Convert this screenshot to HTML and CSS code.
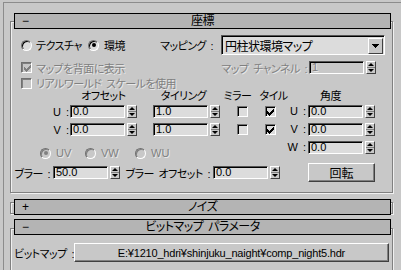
FILE: index.html
```html
<!DOCTYPE html>
<html lang="ja">
<head>
<meta charset="UTF-8">
<title>座標</title>
<link rel="stylesheet" href="styles.css">
</head>
<body>
<div class="panel">
    <div class="rollout rollout-coords">
        <div class="roll-head"><span class="sign">−</span><span class="roll-title">座標</span></div>

        <div class="row row-map">
            <label class="opt opt-tex"><span class="radio"></span>テクスチャ</label>
            <label class="opt opt-env"><span class="radio on"></span>環境</label>
            <span class="map-label">マッピング :</span>
            <div class="select">
                <span class="select-text">円柱状環境マップ</span>
                <span class="select-btn">
                    <svg width="7" height="4" viewBox="0 0 7 4"><path d="M0 0h7v1H0zM1 1h5v1H1zM2 2h3v1H2zM3 3h1v1H3z"/></svg>
                </span>
            </div>
        </div>

        <div class="row row-back">
            <label class="opt off">
                <span class="check">
                    <svg width="7" height="7" viewBox="0 0 7 7"><path d="M6 0h1v3H6zM5 1h1v3H5zM4 2h1v3H4zM3 3h1v3H3zM2 4h1v3H2zM1 3h1v3H1zM0 2h1v3H0z"/></svg>
                </span>マップを背面に表示
            </label>
            <span class="chan-label off">マップ チャンネル :</span>
            <span class="spinner"><span class="field off">1</span><span class="spin"></span></span>
        </div>

        <div class="row row-real">
            <label class="opt off"><span class="check"></span>リアルワールド スケールを使用</label>
        </div>

        <div class="row row-heads">
            <span class="h-off">オフセット</span>
            <span class="h-til">タイリング</span>
            <span class="h-mir">ミラー</span>
            <span class="h-tile">タイル</span>
            <span class="h-ang">角度</span>
        </div>

        <div class="uvw">
            <span class="axis">U :</span>
            <span class="spinner c-off"><span class="field">0.0</span><span class="spin"></span></span>
            <span class="spinner c-til"><span class="field">1.0</span><span class="spin"></span></span>
            <span class="check c-mir"></span>
            <span class="check c-tile">
                <svg width="7" height="7" viewBox="0 0 7 7"><path d="M6 0h1v3H6zM5 1h1v3H5zM4 2h1v3H4zM3 3h1v3H3zM2 4h1v3H2zM1 3h1v3H1zM0 2h1v3H0z"/></svg>
            </span>
            <span class="axis c-alab">U :</span>
            <span class="spinner c-ang"><span class="field">0.0</span><span class="spin"></span></span>

            <span class="axis">V :</span>
            <span class="spinner c-off"><span class="field">0.0</span><span class="spin"></span></span>
            <span class="spinner c-til"><span class="field">1.0</span><span class="spin"></span></span>
            <span class="check c-mir"></span>
            <span class="check c-tile">
                <svg width="7" height="7" viewBox="0 0 7 7"><path d="M6 0h1v3H6zM5 1h1v3H5zM4 2h1v3H4zM3 3h1v3H3zM2 4h1v3H2zM1 3h1v3H1zM0 2h1v3H0z"/></svg>
            </span>
            <span class="axis c-alab">V :</span>
            <span class="spinner c-ang"><span class="field">0.0</span><span class="spin"></span></span>

            <div class="uv-radios off">
                <label class="opt opt-uv"><span class="radio on"></span>UV</label>
                <label class="opt opt-vw"><span class="radio"></span>VW</label>
                <label class="opt"><span class="radio"></span>WU</label>
            </div>
            <span class="axis c-alab">W :</span>
            <span class="spinner c-ang"><span class="field">0.0</span><span class="spin"></span></span>
        </div>

        <div class="row row-blur">
            <span class="blur-label">ブラー :</span>
            <span class="spinner"><span class="field">50.0</span><span class="spin"></span></span>
            <span class="blur-off-label">ブラー オフセット :</span>
            <span class="spinner"><span class="field">0.0</span><span class="spin"></span></span>
            <button class="btn btn-rotate">回転</button>
        </div>
    </div>

    <div class="rollout rollout-noise">
        <div class="roll-head"><span class="sign">+</span><span class="roll-title">ノイズ</span></div>
    </div>

    <div class="rollout rollout-bitmap">
        <div class="roll-head"><span class="sign">−</span><span class="roll-title">ビットマップ パラメータ</span></div>
        <div class="row row-bitmap">
            <span class="bitmap-label">ビットマップ :</span>
            <button class="btn btn-path">E:¥1210_hdri¥shinjuku_naight¥comp_night5.hdr</button>
        </div>
    </div>
</div>
</body>
</html>
```

FILE: styles.css
```css
body {
    margin: 0;
    width: 401px;
    height: 270px;
    overflow: hidden;
    background: #c8c8c8;
    font-family: "Liberation Sans", "Noto Sans CJK JP", sans-serif;
    font-size: 11px;
    font-feature-settings: "palt" 1;
    letter-spacing: -0.5px;
    word-spacing: 2px;
    white-space: nowrap;
    color: #000;
}

.panel {
    box-sizing: border-box;
    height: 268px;
    margin: 2px 0 0 3px;
    padding-left: 6px;
    border-top: 1px solid #8c8c8c;
    border-left: 1px solid #8c8c8c;
}

/* rollouts */
.rollout {
    box-sizing: border-box;
    width: 383px;
    border: 1px solid #808080;
    box-shadow: 1px 1px 0 #f0f0f0, inset 1px 1px 0 #f0f0f0;
}

.rollout-coords {
    margin-top: 18px;
    padding-bottom: 10px;
}

.rollout-noise {
    margin-top: 9px;
}

.rollout-bitmap {
    margin-top: 14px;
    height: 42px;
    border-bottom: none;
}

.roll-head {
    box-sizing: border-box;
    height: 16px;
    margin: -9px 1px 0 3px;
    border: 1px solid #000;
    background: #b4b4b4;
    display: grid;
    grid-template-columns: 1fr auto 1fr;
    align-items: center;
    line-height: 14px;
    font-size: 12px;
}

.rollout-noise .roll-head {
    margin-top: -4px;
    margin-bottom: -2px;
}

.rollout-bitmap .roll-head {
    margin-top: -10px;
}

.sign {
    padding-left: 7px;
    letter-spacing: 0;
}

/* rows */
.row {
    display: flex;
    align-items: center;
}

.row-map {
    height: 20px;
    margin-top: 6px;
    padding-left: 10px;
}

.row-back {
    height: 13px;
    margin-top: 6px;
    padding: 0 16px 0 10px;
}

.row-real {
    height: 12px;
    margin-top: 3px;
    padding-left: 10px;
}

.row-heads {
    height: 12px;
}

.row-blur {
    height: 19px;
    margin-top: 4px;
}

.row-bitmap {
    height: 19px;
    margin-top: 8px;
    padding-right: 4px;
}

.opt {
    display: flex;
    align-items: center;
    gap: 4px;
}

.opt-tex { width: 67px; }
.opt-env { width: 72px; gap: 5px; }

.map-label { width: 61px; }

.off {
    color: #808080;
    text-shadow: 1px 1px 0 #e8e8e8;
}

/* right-aligned labels overflow to the left */
.chan-label,
.blur-label,
.blur-off-label,
.axis {
    box-sizing: border-box;
    display: flex;
    justify-content: flex-end;
}

/* radio / check */
.radio {
    box-sizing: border-box;
    flex: none;
    width: 11px;
    height: 11px;
    border-radius: 50%;
    border: 1px solid;
    border-color: #707070 #fff #fff #707070;
    background: #dcdcdc;
    box-shadow: inset 1px 1px 0 #000;
    display: flex;
    align-items: center;
    justify-content: center;
}

.radio.on::after {
    content: "";
    width: 4px;
    height: 4px;
    border-radius: 50%;
    background: #000;
}

.off .radio {
    background: #c8c8c8;
    box-shadow: inset 1px 1px 0 #808080;
}

.off .radio.on::after {
    background: #808080;
}

.check {
    box-sizing: border-box;
    flex: none;
    width: 11px;
    height: 11px;
    border: 1px solid;
    border-color: #707070 #fff #fff #707070;
    background: #dcdcdc;
    box-shadow: inset 1px 1px 0 #000;
    display: flex;
    align-items: center;
    justify-content: center;
    padding: 1px 0 0 1px;
}

.check svg {
    fill: #000;
}

.off .check {
    background: #c8c8c8;
    box-shadow: inset 1px 1px 0 #808080;
}

.off .check svg {
    fill: #808080;
}

/* fields and spinners */
.spinner {
    display: flex;
    align-items: center;
    gap: 2px;
    width: 67px;
    flex: none;
}

.field {
    box-sizing: border-box;
    width: 55px;
    height: 13px;
    border: 1px solid;
    border-color: #555 #fff #fff #555;
    box-shadow: inset 1px 1px 0 #000;
    background: #dcdcdc;
    padding-left: 2px;
    line-height: 11px;
    letter-spacing: 0;
}

.field.off {
    background: #c8c8c8;
}

.spin {
    box-sizing: border-box;
    width: 10px;
    height: 13px;
    border: 1px solid;
    border-color: #fff #404040 #404040 #fff;
    background: linear-gradient(#c8c8c8 5px, #808080 5px, #808080 6px, #c8c8c8 6px);
    display: flex;
    flex-direction: column;
    align-items: center;
}

.spin::before {
    content: "";
    margin-top: 1px;
    border-left: 3px solid transparent;
    border-right: 3px solid transparent;
    border-bottom: 3px solid #000;
}

.spin::after {
    content: "";
    margin-top: auto;
    margin-bottom: 1px;
    border-left: 3px solid transparent;
    border-right: 3px solid transparent;
    border-top: 3px solid #000;
}

.chan-label {
    flex: 1;
    padding-right: 2px;
}

/* dropdown */
.select {
    box-sizing: border-box;
    display: flex;
    align-items: center;
    width: 164px;
    height: 20px;
    border: 1px solid;
    border-color: #555 #fff #fff #555;
    box-shadow: inset 1px 1px 0 #000;
    background: #dcdcdc;
    padding: 1px 1px 0 3px;
}

.select-text {
    flex: 1;
    font-size: 12px;
}

.select-btn {
    box-sizing: border-box;
    width: 15px;
    height: 16px;
    border: 1px solid;
    border-color: #fff #404040 #404040 #fff;
    background: #c8c8c8;
    display: flex;
    align-items: center;
    justify-content: center;
}

/* offset / tiling / angle table */
.row-heads span {
    text-align: center;
}

.h-off { margin-left: 59px; width: 67px; }
.h-til { margin-left: 13px; width: 67px; }
.h-mir { margin-left: 6px; width: 29px; }
.h-tile { margin-left: 7px; width: 29px; }
.h-ang { margin-left: 20px; width: 45px; }

.uvw {
    display: grid;
    grid-template-columns: 59px 67px 16px 67px 8px 28px 28px 24px 67px;
    grid-template-rows: 13px 13px 18px;
    row-gap: 5px;
    margin-top: 4px;
    align-items: center;
}

.axis {
    grid-column: 1;
    padding-right: 1px;
    letter-spacing: 0;
}

.c-off { grid-column: 2; }
.c-til { grid-column: 4; }
.c-mir { grid-column: 6; justify-self: center; }
.c-tile { grid-column: 7; justify-self: center; }
.c-alab { grid-column: 8; padding-right: 2px; }
.c-ang { grid-column: 9; align-self: start; }

.uvw .c-alab {
    align-self: start;
}

.uv-radios {
    grid-column: 1 / 7;
    align-self: end;
    height: 12px;
    display: flex;
    align-items: center;
    padding-left: 29px;
    letter-spacing: 0;
}

.opt-uv { width: 45px; }
.opt-vw { width: 50px; }
.uv-radios .opt { gap: 5px; }

/* blur row */
.blur-label {
    width: 42px;
    padding-right: 3px;
}

.blur-off-label {
    width: 93px;
    padding-right: 3px;
}

/* buttons */
.btn {
    box-sizing: border-box;
    flex: none;
    margin: 0;
    padding: 0;
    border: 1px solid;
    border-color: #fff #404040 #404040 #fff;
    box-shadow: inset -1px -1px 0 #808080;
    background: #c8c8c8;
    font: inherit;
    color: #000;
    display: flex;
    align-items: center;
    justify-content: center;
}

.btn-rotate {
    width: 67px;
    height: 19px;
    margin-left: 28px;
    font-size: 12px;
}

.bitmap-label {
    flex: 1;
    padding-left: 3px;
}

.btn-path {
    width: 315px;
    height: 19px;
    letter-spacing: -0.2px;
}
```
